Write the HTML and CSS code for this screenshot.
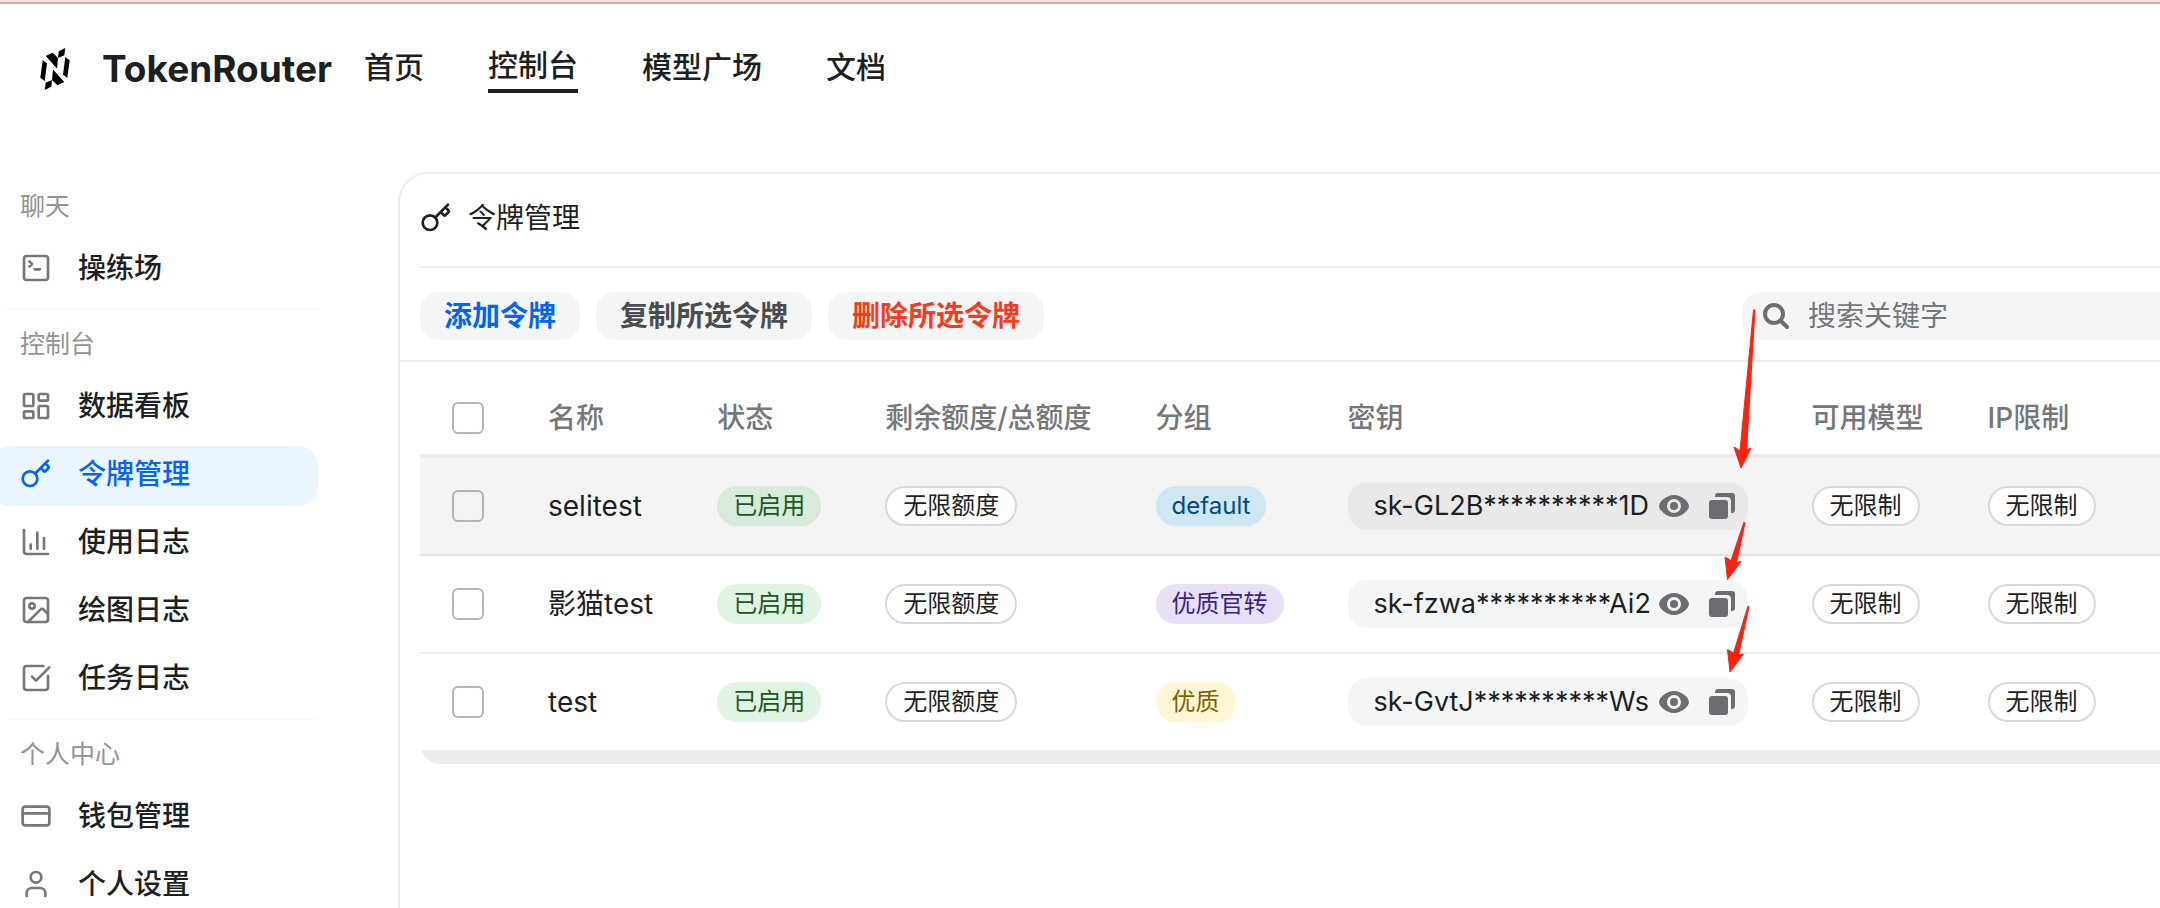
FILE: index.html
```
<!DOCTYPE html>
<html lang="zh-CN">
  <head>
    <meta charset="utf-8" />
    <meta name="viewport" content="width=device-width, initial-scale=1.0" />
    <title>TokenRouter</title>
    <link rel="stylesheet" href="styles.css">
  </head>
  <body>
    <svg class="defs" width="0" height="0" aria-hidden="true">
      <symbol id="key" viewBox="0 0 24 24">
        <path d="m15.5 7.5 2.3 2.3a1 1 0 0 0 1.4 0l2.1-2.1a1 1 0 0 0 0-1.4L19 4M21 2l-9.6 9.6" />
        <circle cx="7.5" cy="15.5" r="5.5" />
      </symbol>
      <symbol id="eye" viewBox="0 0 30 22">
        <path fill-rule="evenodd" d="M15 0C23 0 30 7 30 11S23 22 15 22 0 15 0 11 7 0 15 0zm0 4a7 7 0 1 0 0 14 7 7 0 0 0 0-14z" />
        <circle cx="15" cy="11" r="4" />
      </symbol>
      <symbol id="copy" viewBox="0 0 26 26">
        <path d="M6 3a3 3 0 0 1 3-3h14a3 3 0 0 1 3 3v14a3 3 0 0 1-3 3h-1V8a4 4 0 0 0-4-4H6z" />
        <rect x="0" y="7" width="19" height="19" rx="3" />
      </symbol>
    </svg>

    <header class="header">
      <a class="brand" href="#">
        <svg class="logo" viewBox="0 0 30 42">
          <path d="M25.3 0L18.700 3.300 18 10l6.300-2.700zM5.700 8l7-3.300L18 10l-1 10.500zM2.700 12.300l4.300 3L4.700 33 .3 29.700zM27.300 29.700l-4.300-3L25.300 9l4.400 3.300zM24.300 34l-7 3.300L12 32l1-10.500zM4.700 42l6.600-3.300L12 32l-6.300 2.700z" />
        </svg>
        <span>TokenRouter</span>
      </a>
      <nav class="nav">
        <a href="#">首页</a>
        <a href="#" class="current">控制台</a>
        <a href="#">模型广场</a>
        <a href="#">文档</a>
      </nav>
    </header>

    <div class="layout">
      <aside class="sidebar">
        <div class="group">
          <div class="group-title">聊天</div>
          <a class="item" href="#">
            <svg class="icon" viewBox="0 0 24 24"><rect x="3" y="3" width="18" height="18" rx="2" /><path d="m7 11 2-2-2-2M11 13h4" /></svg>
            操练场
          </a>
        </div>
        <div class="group">
          <div class="group-title">控制台</div>
          <a class="item" href="#">
            <svg class="icon" viewBox="0 0 24 24"><rect x="3" y="3" width="7" height="9" rx="1" /><rect x="14" y="3" width="7" height="5" rx="1" /><rect x="14" y="12" width="7" height="9" rx="1" /><rect x="3" y="16" width="7" height="5" rx="1" /></svg>
            数据看板
          </a>
          <a class="item selected" href="#">
            <svg class="icon"><use href="#key" /></svg>
            令牌管理
          </a>
          <a class="item" href="#">
            <svg class="icon" viewBox="0 0 24 24"><path d="M3 3v16a2 2 0 0 0 2 2h16M18 17V9M13 17V5M8 17v-3" /></svg>
            使用日志
          </a>
          <a class="item" href="#">
            <svg class="icon" viewBox="0 0 24 24"><rect x="3" y="3" width="18" height="18" rx="2" /><circle cx="9" cy="9" r="2" /><path d="m21 15-3.086-3.086a2 2 0 0 0-2.828 0L6 21" /></svg>
            绘图日志
          </a>
          <a class="item" href="#">
            <svg class="icon" viewBox="0 0 24 24"><path d="M21 10.500V19a2 2 0 0 1-2 2H5a2 2 0 0 1-2-2V5a2 2 0 0 1 2-2h12.500M9 11l3 3L22 4" /></svg>
            任务日志
          </a>
        </div>
        <div class="group">
          <div class="group-title">个人中心</div>
          <a class="item" href="#">
            <svg class="icon" viewBox="0 0 24 24"><rect x="2" y="5" width="20" height="14" rx="2" /><path d="M2 10h20" /></svg>
            钱包管理
          </a>
          <a class="item" href="#">
            <svg class="icon" viewBox="0 0 24 24"><path d="M19 21v-2a4 4 0 0 0-4-4H9a4 4 0 0 0-4 4v2" /><circle cx="12" cy="7" r="4" /></svg>
            个人设置
          </a>
        </div>
      </aside>

      <main class="card">
        <h1 class="title">
          <svg class="icon"><use href="#key" /></svg>
          令牌管理
        </h1>
        <div class="toolbar">
          <button class="btn primary" type="button">添加令牌</button>
          <button class="btn" type="button">复制所选令牌</button>
          <button class="btn danger" type="button">删除所选令牌</button>
          <label class="search">
            <svg viewBox="0 0 28 28"><circle cx="12" cy="12" r="9" /><path d="m19 19 6 6" /></svg>
            <input type="text" placeholder="搜索关键字" aria-label="搜索关键字" />
          </label>
        </div>
        <div class="table-wrap">
          <table>
            <thead>
              <tr>
                <th><input type="checkbox" aria-label="全选" /></th>
                <th>名称</th>
                <th>状态</th>
                <th>剩余额度/总额度</th>
                <th>分组</th>
                <th>密钥</th>
                <th>可用模型</th>
                <th class="last">IP限制</th>
              </tr>
            </thead>
            <tbody>
              <tr class="hovered">
                <td><input type="checkbox" aria-label="selitest" /></td>
                <td>selitest</td>
                <td><span class="tag green">已启用</span></td>
                <td><span class="tag outline">无限额度</span></td>
                <td><span class="tag blue">default</span></td>
                <td>
                  <div class="secret">
                    <input type="text" value="sk-GL2B**********1Dx8" aria-label="密钥" readonly />
                    <button type="button" aria-label="显示"><svg class="eye"><use href="#eye" /></svg></button>
                    <button type="button" aria-label="复制"><svg class="copy"><use href="#copy" /></svg></button>
                  </div>
                </td>
                <td><span class="tag outline">无限制</span></td>
                <td><span class="tag outline">无限制</span></td>
              </tr>
              <tr>
                <td><input type="checkbox" aria-label="影猫test" /></td>
                <td>影猫test</td>
                <td><span class="tag green">已启用</span></td>
                <td><span class="tag outline">无限额度</span></td>
                <td><span class="tag purple">优质官转</span></td>
                <td>
                  <div class="secret">
                    <input type="text" value="sk-fzwa**********Ai2F" aria-label="密钥" readonly />
                    <button type="button" aria-label="显示"><svg class="eye"><use href="#eye" /></svg></button>
                    <button type="button" aria-label="复制"><svg class="copy"><use href="#copy" /></svg></button>
                  </div>
                </td>
                <td><span class="tag outline">无限制</span></td>
                <td><span class="tag outline">无限制</span></td>
              </tr>
              <tr>
                <td><input type="checkbox" aria-label="test" /></td>
                <td>test</td>
                <td><span class="tag green">已启用</span></td>
                <td><span class="tag outline">无限额度</span></td>
                <td><span class="tag yellow">优质</span></td>
                <td>
                  <div class="secret">
                    <input type="text" value="sk-GvtJ**********Wse" aria-label="密钥" readonly />
                    <button type="button" aria-label="显示"><svg class="eye"><use href="#eye" /></svg></button>
                    <button type="button" aria-label="复制"><svg class="copy"><use href="#copy" /></svg></button>
                  </div>
                </td>
                <td><span class="tag outline">无限制</span></td>
                <td><span class="tag outline">无限制</span></td>
              </tr>
            </tbody>
          </table>
          <div class="scrollbar"></div>
        </div>
      </main>
    </div>

    <!-- arrows drawn over the copy buttons -->
    <svg class="arrows" width="40" height="380" viewBox="1720 300 40 380" aria-hidden="true">
      <path d="M1753.500 310h1.500l-8.500 140 4.500-2-10 20-7-21 6 4z" />
      <path d="M1744 522l1 1-8.500 39.500 4.500-1-13.500 18-2.500-22.500 6 3.500z" />
      <path d="M1748 606l1 1-10.500 48 5-1-13.500 18-2.500-22.500 6 3.500z" />
    </svg>
  </body>
</html>
```
FILE: styles.css
```
* {
  box-sizing: border-box;
}
html,
body {
  height: 100vh;
  margin: 0;
  overflow: hidden;
  background-color: #ffffff;
}
body {
  display: flex;
  flex-direction: column;
  position: relative;
  border-top: 2px solid #f8e3dc;
  color: #1c1f23;
  font: 28px/40px Inter, 'Noto Sans CJK SC', sans-serif;
}
a {
  color: inherit;
  text-decoration: none;
}
input,
button {
  font: inherit;
  color: inherit;
}
.defs {
  position: absolute;
}
.icon {
  width: 32px;
  height: 32px;
  flex: none;
  fill: none;
  stroke: currentColor;
  stroke-width: 2;
  stroke-linecap: round;
  stroke-linejoin: round;
}

/* header */
.header {
  display: flex;
  align-items: center;
  gap: 32px;
  height: 128px;
  flex: none;
  padding: 0 40px;
  border-top: 2px solid #c6b4ae;
}
.brand {
  display: flex;
  align-items: center;
  gap: 32px;
  padding-top: 4px;
  font-size: 37px;
  font-weight: 700;
}
.logo {
  width: 30px;
  height: 42px;
  fill: #000000;
}
.nav {
  display: flex;
  align-items: center;
  gap: 64px;
  font-size: 30px;
  font-weight: 500;
}
.nav a {
  padding: 4px 0;
}
.nav .current {
  border-bottom: 4px solid #1c1f23;
}

/* layout */
.layout {
  display: flex;
  flex: 1;
  min-height: 0;
  padding-top: 42px;
}
.sidebar {
  width: 398px;
  flex: none;
  padding-right: 80px;
}
.group + .group {
  margin: 8px 0 0 6px;
  border-top: 2px solid #fafafa;
}
.group-title {
  padding: 14px 20px;
  font-size: 25px;
  color: #929394;
}
.group + .group .group-title {
  padding-left: 14px;
}
.item {
  display: flex;
  align-items: center;
  gap: 26px;
  height: 60px;
  margin-left: -10px;
  padding: 0 0 4px 30px;
  border-radius: 20px;
  font-weight: 500;
}
.group + .group .item {
  margin-left: -16px;
}
.item + .item {
  margin-top: 8px;
}
.item .icon {
  color: #75777b;
}
.selected {
  background: #eaf5ff;
  color: #0064fa;
}
.selected .icon {
  color: #0064fa;
}

/* token card */
.card {
  flex: 1;
  min-width: 0;
  border: 2px solid #ececed;
  border-width: 2px 0 0 2px;
  border-radius: 30px 0 0 0;
}
.title {
  display: flex;
  align-items: center;
  gap: 16px;
  height: 94px;
  margin: 0 0 0 20px;
  padding-bottom: 4px;
  border-bottom: 2px solid #ececed;
  font-size: 28px;
  font-weight: 400;
}
.toolbar {
  display: flex;
  gap: 16px;
  padding: 24px 0 20px 20px;
  border-bottom: 2px solid #ececed;
}
.btn {
  height: 48px;
  padding: 0 24px;
  border: none;
  border-radius: 20px;
  background: #f4f6f6;
  color: #494c50;
  font-weight: 600;
  line-height: 40px;
  cursor: pointer;
}
.primary {
  color: #0064fa;
}
.danger {
  color: #f93920;
}
.search {
  display: flex;
  align-items: center;
  gap: 18px;
  width: 418px;
  height: 48px;
  margin-left: auto;
  padding-left: 20px;
  border-radius: 20px 0 0 20px;
  background: #f4f6f6;
}
.search svg {
  width: 28px;
  height: 28px;
  flex: none;
  fill: none;
  stroke: #6b6d71;
  stroke-width: 4;
  stroke-linecap: round;
}
.search input {
  flex: 1;
  min-width: 0;
  padding: 0;
  border: none;
  outline: none;
  background: none;
}
.search input::placeholder {
  color: #75777b;
}

/* table */
.table-wrap {
  margin: 20px 0 0 20px;
  overflow: hidden;
  border-radius: 0 0 0 20px;
}
table {
  width: 100%;
  border-collapse: separate;
  border-spacing: 0;
  white-space: nowrap;
}
th,
td {
  height: 98px;
  padding: 0 32px;
  border-bottom: 2px solid #ececed;
  text-align: left;
  font-weight: 400;
}
th {
  height: 76px;
  border-bottom: 4px solid #ececed;
  color: #75777b;
  font-weight: 500;
}
.last {
  width: 100%;
}
tbody tr:last-child td {
  height: 96px;
  border-bottom: none;
}
input[type='checkbox'] {
  appearance: none;
  display: block;
  width: 32px;
  height: 32px;
  margin: 0;
  border: 2px solid #b4b5b7;
  border-radius: 6px;
  background: #ffffff;
}
.hovered td {
  background: #f4f4f4;
  border-bottom-color: #e1e2e3;
}
.hovered input[type='checkbox'] {
  background: none;
}
.tag {
  display: block;
  width: max-content;
  height: 40px;
  padding: 0 16px;
  border-radius: 20px;
  font-size: 24px;
}
.outline {
  border: 2px solid #d5d9dd;
  background: #ffffff;
  line-height: 36px;
}
.green {
  background: #e1f4e3;
  color: #1b5924;
}
.hovered .green {
  background: #d7eadb;
}
.blue {
  background: #cfe6f3;
  color: #004b83;
}
.purple {
  background: #e8e0f5;
  color: #3c1e8c;
}
.yellow {
  background: #fff6d5;
  color: #7a6400;
}
.secret {
  display: flex;
  align-items: center;
  width: 400px;
  height: 48px;
  padding-left: 26px;
  border-radius: 20px;
  background: #f4f6f6;
  font-size: 27px;
}
.hovered .secret {
  background: #e9e9e9;
}
.secret input {
  flex: 1;
  min-width: 0;
  padding: 0;
  border: none;
  outline: none;
  background: none;
}
.secret button {
  display: flex;
  align-items: center;
  justify-content: center;
  width: 48px;
  height: 48px;
  padding: 0;
  border: none;
  background: none;
  cursor: pointer;
}
.secret button:last-child {
  margin-right: 2px;
}
.secret svg {
  height: 26px;
  fill: #6b6d71;
}
.eye {
  width: 30px;
}
.copy {
  width: 26px;
}
.scrollbar {
  height: 14px;
  background: #ecedef;
}

.arrows {
  position: absolute;
  top: 298px;
  left: 1720px;
  fill: #ff2010;
  stroke: #ff2010;
  stroke-linejoin: round;
}
```
